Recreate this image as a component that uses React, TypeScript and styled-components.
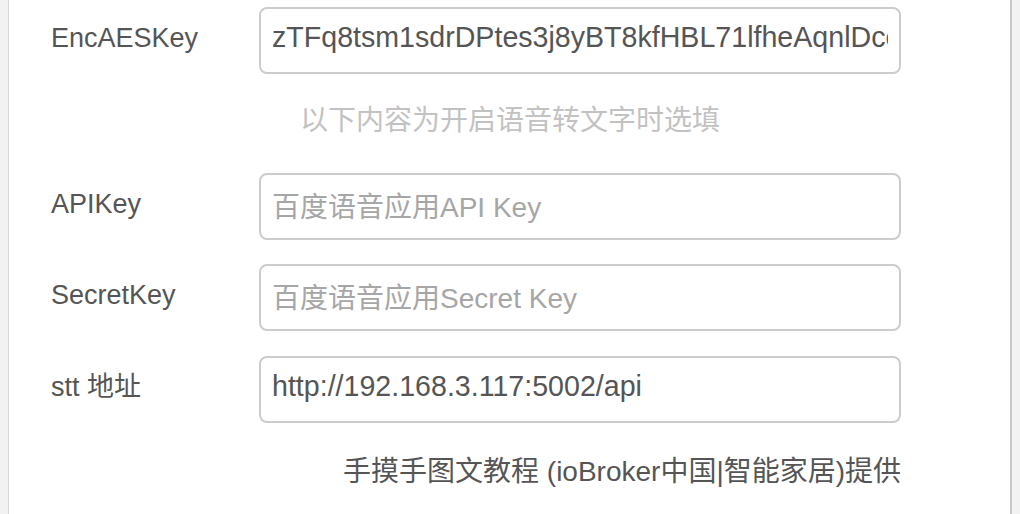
import React from "react";
import styled, { createGlobalStyle } from "styled-components";

const GlobalStyle = createGlobalStyle`
  html, body {
    margin: 0;
    padding: 0;
    background: #f2f2f2;
    overflow: hidden;
  }
  body {
    font-family: "Liberation Sans", "Noto Sans CJK SC", sans-serif;
  }
`;

const Panel = styled.div`
  margin-left: 8px;
  width: 1004px;
  height: 514px;
  background: #ffffff;
  border-left: 1px solid #d6d6d6;
  border-right: 2px solid #c8c8c8;
  padding: 7px 0 0 42px;
  box-sizing: border-box;
  display: flex;
  flex-direction: column;
`;

const Row = styled.div<{ $gap?: number }>`
  display: grid;
  grid-template-columns: 208px 642px;
  margin-bottom: ${(p) => p.$gap ?? 24}px;
`;

const Label = styled.label`
  font-size: 27px;
  line-height: 40px;
  padding-top: 11px;
  color: #555555;
`;

const Input = styled.input`
  box-sizing: border-box;
  width: 642px;
  height: 67px;
  border: 2px solid #cccccc;
  border-radius: 8px;
  padding: 8px 11px 14px 11px;
  font-family: "Liberation Sans", "Noto Sans CJK SC", sans-serif;
  font-size: 28.6px;
  color: #555555;
  background: #ffffff;
  outline: none;
  &::placeholder {
    color: #a6a6a6;
    font-size: 28px;
  }
  &:placeholder-shown {
    padding-top: 12px;
    padding-bottom: 10px;
  }
`;

const HintRow = styled.div`
  display: grid;
  grid-template-columns: 208px 642px;
  padding: 27px 0 32px;
`;

const Hint = styled.div`
  grid-column: 2;
  padding-left: 41px;
  font-size: 28px;
  line-height: 40px;
  color: #c2c2c2;
`;

const Footer = styled.div`
  width: 850px;
  text-align: right;
  font-size: 28px;
  line-height: 40px;
  color: #555555;
  margin-top: 5px;
`;

export default function App() {
  return (
    <>
      <GlobalStyle />
      <Panel>
        <Row $gap={0}>
          <Label>EncAESKey</Label>
          <Input defaultValue="zTFq8tsm1sdrDPtes3j8yBT8kfHBL71lfheAqnlDcoRkHpz2" />
        </Row>
        <HintRow>
          <Hint>以下内容为开启语音转文字时选填</Hint>
        </HintRow>
        <Row>
          <Label>APIKey</Label>
          <Input placeholder="百度语音应用API Key" />
        </Row>
        <Row $gap={25}>
          <Label>SecretKey</Label>
          <Input placeholder="百度语音应用Secret Key" />
        </Row>
        <Row>
          <Label>stt 地址</Label>
          <Input defaultValue="http://192.168.3.117:5002/api" />
        </Row>
        <Footer>手摸手图文教程 (ioBroker中国|智能家居)提供</Footer>
      </Panel>
    </>
  );
}
